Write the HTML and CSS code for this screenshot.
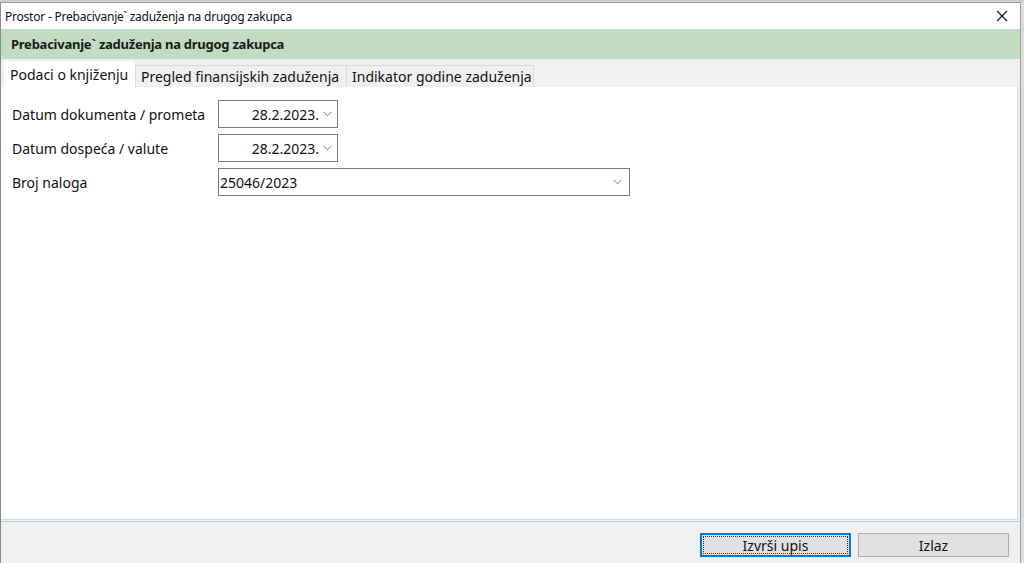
FILE: index.html
```html
<!DOCTYPE html>
<html>
<head>
<meta charset="utf-8">
<link rel="stylesheet" href="styles.css">
</head>
<body>
<div class="bgstrip"></div>
<div class="window">
  <div class="titlebar">
    <span class="title">Prostor - Prebacivanje` zaduženja na drugog zakupca</span>
    <svg class="close" width="12" height="12" viewBox="0 0 12 12"><path d="M1 1L11 11M11 1L1 11" stroke="#111" stroke-width="1.1" fill="none"/></svg>
  </div>
  <div class="header">Prebacivanje` zaduženja na drugog zakupca</div>
  <div class="tabs">
    <div class="tab active">Podaci o knjiženju</div>
    <div class="tab">Pregled finansijskih zaduženja</div>
    <div class="tab">Indikator godine zaduženja</div>
  </div>
  <div class="content">
    <div class="row">
      <div class="label">Datum dokumenta / prometa</div>
      <div class="datebox"><span>28.2.2023.</span><svg class="chev" width="9" height="6" viewBox="0 0 9 6"><path d="M0.5 0.8L4.5 4.8L8.5 0.8" stroke="#777" fill="none"/></svg></div>
    </div>
    <div class="row">
      <div class="label">Datum dospeća / valute</div>
      <div class="datebox"><span>28.2.2023.</span><svg class="chev" width="9" height="6" viewBox="0 0 9 6"><path d="M0.5 0.8L4.5 4.8L8.5 0.8" stroke="#777" fill="none"/></svg></div>
    </div>
    <div class="row">
      <div class="label">Broj naloga</div>
      <div class="combo"><span>25046/2023</span><svg class="chev" width="9" height="6" viewBox="0 0 9 6"><path d="M0.5 0.8L4.5 4.8L8.5 0.8" stroke="#777" fill="none"/></svg></div>
    </div>
  </div>
  <div class="footer">
    <div class="btn primary"><span>Izvrši upis</span></div>
    <div class="btn">Izlaz</div>
  </div>
</div>
</body>
</html>
```

FILE: styles.css
```css
html, body {
  margin: 0;
  padding: 0;
}
body {
  width: 1024px;
  height: 563px;
  overflow: hidden;
  background: #dcdcdc;
  font-family: "Noto Sans", "Open Sans", sans-serif;
  color: #000;
}
.bgstrip {
  height: 2px;
  width: 1024px;
  background: #cfcfcf;
}
.window {
  width: 1021px;
  height: 561px;
  box-sizing: border-box;
  border-left: 1px solid #8a8a8a;
  border-right: 1px solid #a0a0a0;
  border-top: 1px solid #9a9a9a;
  background: #f0f0f0;
  display: flex;
  flex-direction: column;
}
.titlebar {
  height: 26px;
  background: #fff;
  display: flex;
  align-items: center;
  justify-content: space-between;
  padding: 0 12px 0 4px;
  flex: none;
}
.title {
  font-size: 12px;
  letter-spacing: -0.22px;
  color: #111;
}
.close {
  display: block;
}
.header {
  height: 30px;
  background: #c1dcc1;
  font-size: 13px;
  font-weight: bold;
  letter-spacing: -0.25px;
  color: #1a1a1a;
  display: flex;
  align-items: center;
  padding-left: 10px;
  flex: none;
}
.tabs {
  height: 28px;
  display: flex;
  align-items: flex-end;
  padding-left: 3px;
  flex: none;
}
.tab {
  height: 22px;
  box-sizing: border-box;
  border: 1px solid #d9d9d9;
  border-bottom: none;
  background: #f0f0f0;
  font-size: 14px;
  letter-spacing: 0;
  padding: 0 5px;
  display: flex;
  align-items: center;
  color: #111;
  white-space: nowrap;
}
.tab.active {
  height: 26px;
  background: #fff;
  border-color: #fff;
  padding: 0 5px;
  width: 131px;
}
.tab:nth-child(2) { width: 212px; }
.tab:nth-child(3) { width: 188px; margin-left: -1px; }
.content {
  flex: 1;
  background: #fff;
  border-right: 1px solid #d9d9d9;
  border-bottom: 1px solid #d9d9d9;
  margin-right: 2px;
  padding: 13px 0 0 11px;
  display: flex;
  flex-direction: column;
  gap: 6px;
}
.row {
  display: flex;
  align-items: center;
}
.label {
  width: 206px;
  font-size: 14px;
  letter-spacing: 0;
  color: #111;
}
.datebox, .combo {
  height: 28px;
  box-sizing: border-box;
  border: 1px solid #7a7a7a;
  display: flex;
  align-items: center;
  font-size: 14px;
  letter-spacing: 0;
  color: #111;
}
.datebox {
  width: 120px;
  justify-content: flex-end;
  padding-right: 5px;
  gap: 4px;
}
.combo {
  width: 412px;
  justify-content: space-between;
  padding: 0 7px 0 1px;
}
.chev { display: block; }
.footer {
  height: 42px;
  box-sizing: border-box;
  flex: none;
  border-top: 1px solid #a8d4f4;
  margin-top: 1px;
  display: flex;
  justify-content: flex-end;
  align-items: flex-start;
  padding: 11px 11px 0 0;
  gap: 7px;
}
.btn {
  width: 151px;
  height: 24px;
  box-sizing: border-box;
  background: #e1e1e1;
  border: 1px solid #adadad;
  display: flex;
  align-items: center;
  justify-content: center;
  font-size: 14px;
  color: #111;
}
.btn.primary {
  border: 2px solid #0078d7;
  padding: 1px;
}
.btn.primary span {
  flex: 1;
  align-self: stretch;
  border: 1px dotted #333;
  display: flex;
  align-items: center;
  justify-content: center;
}
```
